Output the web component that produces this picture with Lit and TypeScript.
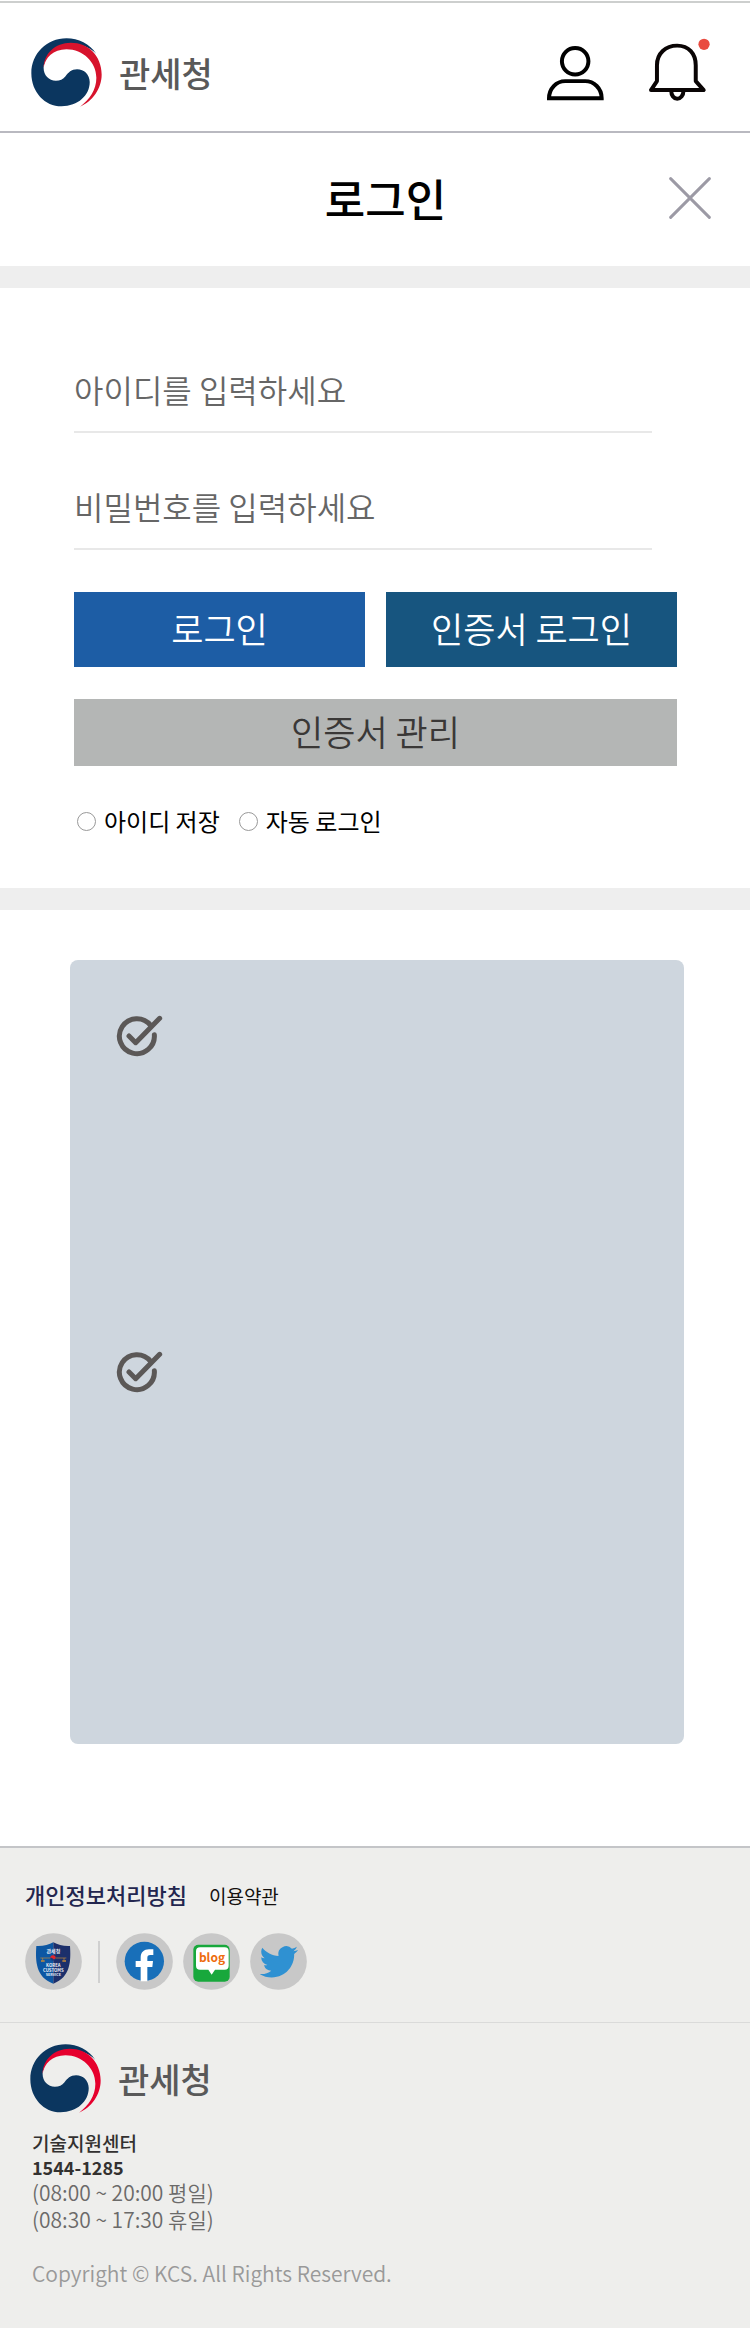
import { LitElement, html, css } from "lit";
import { customElement, property } from "lit/decorators.js";

@customElement("kcs-brand")
class KcsBrand extends LitElement {
  @property() tone = "#d7132d";

  static styles = css`
    :host { display: block; }
    .brand { display: flex; align-items: center; gap: 17px; color: #595959; text-decoration: none; font-size: 34px; line-height: 44px; font-weight: 500; }
    .emblem { display: block; width: 71px; height: 69px; flex: none; }
  `;

  render() {
    return html`
      <a class="brand" href="#">
        <svg class="emblem" viewBox="94 112 212 208" aria-hidden="true">
          <path fill="#0b365f" d="M200 113C140 113 94 160 94 218C94 275 135 318 185 318C235 318 270 285 270 245C270 222 253 206 232 206C214 206 206 216 197 227C190 236 180 241 168 241C147 241 131 225 131 202C134 165 170 130 213 130C245 130 275 142 290 160C270 130 236 113 200 113Z" />
          <path fill=${this.tone} d="M131 202C131 160 165 126 213 126C265 126 306 165 306 222C306 265 278 303 241 319C270 298 290 268 290 232C290 185 250 146 200 146C160 146 135 172 131 202Z" />
        </svg>
        <span>관세청</span>
      </a>
    `;
  }
}

@customElement("app-root")
class AppRoot extends LitElement {
  static styles = css`
    :host {
      display: flex;
      flex-direction: column;
      min-height: 100vh;
      background: #fff;
      color: #000;
      font-family: "Noto Sans CJK KR", "Noto Sans", sans-serif;
    }
    * { box-sizing: border-box; }
    button { font: inherit; border: 0; padding: 0; background: none; cursor: pointer; }
    svg { display: block; }

    .topbar { display: flex; justify-content: space-between; align-items: flex-start; margin-top: 1px; padding: 35px 40px 24px 31px; border-top: 2px solid #cdcfce; border-bottom: 2px solid #b9b9c0; }
    .tools { display: flex; align-items: flex-end; gap: 45px; }
    .person { width: 57px; height: 56px; }
    .bell { width: 61px; height: 63px; }

    .titlebar { display: grid; grid-template-columns: 1fr auto 1fr; align-items: center; padding: 44px 39px 47px 60px; }
    .title { grid-column: 2; margin: 0; font-size: 44px; line-height: 42px; font-weight: 500; }
    .close { justify-self: end; }
    .close svg { width: 42px; height: 42px; }

    .login { border-top: 22px solid #eee; border-bottom: 22px solid #eee; padding: 78px 73px 49px 74px; }
    .fields { display: grid; gap: 50px; margin-right: 25px; }
    .field { display: block; width: 100%; height: 67px; padding: 0 0 19px; border: 0; border-bottom: 2px solid #e8e8e8; border-radius: 0; outline: 0; background: none; color: #333; font: 350 32px/46px "Noto Sans CJK KR", sans-serif; }
    .field::placeholder { color: #666; opacity: 1; }
    .actions { display: grid; grid-template-columns: 1fr 1fr; gap: 32px 21px; margin-top: 42px; }
    .action { height: 75px; padding-bottom: 3px; color: #fff; font-size: 35px; line-height: 48px; font-weight: 350; }
    .enter { background: #1d5da5; }
    .cert { background: #17557f; }
    .manage { grid-column: 1 / -1; height: 67px; background: #b4b6b5; color: #3a3837; }
    .options { display: flex; gap: 19px; margin-top: 37px; padding-left: 3px; }
    .option { display: flex; align-items: center; gap: 8px; font-size: 24px; line-height: 36px; }
    .radio { appearance: none; width: 19px; height: 19px; margin: 0; border: 1px solid #999; border-radius: 50%; background: #fff; }
    .radio:checked { background: #1d5da5; box-shadow: inset 0 0 0 4px #fff; }

    .notices { margin: 50px 66px 102px 70px; padding: 55px 46px 0; border-radius: 8px; background: #ced6de; list-style: none; }
    .notice { padding-bottom: 294px; }
    .notice + .notice { padding-bottom: 351px; }
    .check { width: 48px; height: 42px; }

    .footer { flex: 1; background: #eeeeec; border-top: 2px solid #c4c5c8; }
    .policies { display: flex; align-items: baseline; gap: 22px; padding: 29px 25px 0; line-height: 34px; font-size: 19px; }
    .policies a { color: #14110f; text-decoration: none; }
    .policies .privacy { color: #23264f; font-size: 22px; font-weight: 500; }
    .social { display: flex; align-items: center; gap: 10px; padding: 20px 25px 32px; border-bottom: 1px solid #dadad9; }
    .social svg { width: 57px; height: 57px; }
    .rule { width: 2px; height: 42px; margin: 0 6px; background: #d0d0d0; }
    .org { padding: 21px 30px 36px; }
    .contact { margin: 18px 0 0 2px; font-style: normal; font-size: 21px; line-height: 27px; color: #6b6a69; font-weight: 350; }
    .contact p { margin: 0; }
    .contact .center { font-size: 19px; line-height: 24px; font-weight: 500; color: #333130; }
    .contact .phone { display: block; font-size: 18px; line-height: 24px; font-weight: 700; color: #333130; text-decoration: none; }
    .copyright { margin: 26px 0 0 2px; font-size: 21px; line-height: 28px; font-weight: 350; color: #999; }
    .tiny { font-weight: 700; text-anchor: middle; }
  `;

  private check() {
    return html`
      <svg class="check" viewBox="198 225 144 126" fill="none" stroke="#5b5857" stroke-width="15" stroke-linecap="round" stroke-linejoin="round" aria-hidden="true">
        <path d="M302 256A52.500 52.500 0 1 0 313 284" />
        <path d="M237 288L257 308L329 235" />
      </svg>
    `;
  }

  render() {
    return html`
      <header class="topbar">
        <kcs-brand></kcs-brand>
        <div class="tools">
          <button type="button" aria-label="내 정보">
            <svg class="person" viewBox="515 132 172 167" fill="none" stroke="#000" stroke-width="12">
              <circle cx="600" cy="180" r="40" />
              <path d="M521 292C521 262 543 240 570 240H630C657 240 680 262 680 292Z" />
            </svg>
          </button>
          <button type="button" aria-label="알림">
            <svg class="bell" viewBox="822 112 184 188" fill="none" stroke="#0a0505" stroke-width="12" stroke-linejoin="round">
              <path d="M846 241V193C846 158 872 134 907 134C942 134 963 158 963 193V241L987 268H828Z" />
              <path d="M889 270C889 284 897 294 907 294C917 294 926 284 926 270" />
              <circle cx="988" cy="130" r="17" fill="#e94b40" stroke="none" />
            </svg>
          </button>
        </div>
      </header>

      <div class="titlebar">
        <h1 class="title">로그인</h1>
        <button class="close" type="button" aria-label="닫기">
          <svg viewBox="882 531 127 127" stroke="#9c9aa5" stroke-width="9" stroke-linecap="round">
            <path d="M887 536L1004 653M1004 536L887 653" />
          </svg>
        </button>
      </div>

      <form class="login" @submit=${(e: Event) => e.preventDefault()}>
        <div class="fields">
          <input class="field" type="text" aria-label="아이디" placeholder="아이디를 입력하세요" />
          <input class="field" type="password" aria-label="비밀번호" placeholder="비밀번호를 입력하세요" />
        </div>
        <div class="actions">
          <button class="action enter" type="submit">로그인</button>
          <button class="action cert" type="button">인증서 로그인</button>
          <button class="action manage" type="button">인증서 관리</button>
        </div>
        <div class="options">
          <label class="option"><input class="radio" type="radio" name="keep" value="id" />아이디 저장</label>
          <label class="option"><input class="radio" type="radio" name="keep" value="auto" />자동 로그인</label>
        </div>
      </form>

      <ul class="notices">
        <li class="notice">${this.check()}</li>
        <li class="notice">${this.check()}</li>
      </ul>

      <footer class="footer">
        <nav class="policies">
          <a class="privacy" href="#">개인정보처리방침</a>
          <a href="#">이용약관</a>
        </nav>
        <div class="social">
          <a href="#" aria-label="관세청">
            <svg viewBox="74 307 171 171">
              <circle cx="159.500" cy="392.500" r="85" fill="#c8c8c8" />
              <path fill="#0d57a3" d="M108 346C128 347 145 343 159 335V459C106 440 105 390 108 346Z" />
              <path fill="#1c2f6b" d="M159 335C173 343 190 347 209 346C212 390 211 440 159 459Z" />
              <path d="M120 382H198M127 382V389M191 382V389" stroke="#c58b3a" stroke-width="2" />
              <path d="M122 389H133V393H122ZM186 389H197V393H186Z" fill="#c58b3a" />
              <circle cx="158" cy="382" r="8" fill="#1b3d7c" />
              <path d="M150 382A8 8 0 0 1 166 382Q162 388 158 384Q154 380 150 382Z" fill="#e0252c" />
              <g class="tiny" fill="#e8edf5">
                <text x="159" y="368" font-size="15">관세청</text>
                <text x="159" y="409" font-size="13">KOREA</text>
                <text x="159" y="423" font-size="13">CUSTOMS</text>
                <text x="159" y="437" font-size="11">SERVICE</text>
              </g>
            </svg>
          </a>
          <span class="rule"></span>
          <a href="#" aria-label="Facebook">
            <svg viewBox="348 307 171 171">
              <circle cx="433.500" cy="392.500" r="85" fill="#c8c8c8" />
              <circle cx="433" cy="392" r="59" fill="#186fb9" />
              <path fill="#fff" d="M422 452V409H407V391H422V381C422 365 432 356 447 356H460V373H451C444 373 442 376 442 382V391H459L457 409H442V452Z" />
            </svg>
          </a>
          <a href="#" aria-label="Blog">
            <svg viewBox="548 307 171 171">
              <circle cx="633.500" cy="392.500" r="85" fill="#c8c8c8" />
              <rect x="579" y="342" width="109" height="111" rx="15" fill="#18a83c" />
              <path fill="#fff" d="M599 350H673Q685 350 685 362V405Q685 417 673 417H644L634 432L624 417H599Q587 417 587 405V362Q587 350 599 350Z" />
              <text class="tiny" x="635" y="394" font-size="36" fill="#ee6c0e">blog</text>
            </svg>
          </a>
          <a href="#" aria-label="Twitter">
            <svg viewBox="751 307 171 171">
              <circle cx="836.500" cy="392.500" r="85" fill="#c8c8c8" />
              <path fill="#2f91d2" transform="translate(780 336) scale(4.8)" d="M23.953 4.570a10 10 0 01-2.825.775 4.958 4.958 0 002.163-2.723c-.951.555-2.005.959-3.127 1.184a4.920 4.920 0 00-8.384 4.482C7.690 8.095 4.067 6.130 1.640 3.162a4.822 4.822 0 00-.666 2.475c0 1.710.870 3.213 2.188 4.096a4.904 4.904 0 01-2.228-.616v.060a4.923 4.923 0 003.946 4.827 4.996 4.996 0 01-2.212.085 4.936 4.936 0 004.604 3.417 9.867 9.867 0 01-6.102 2.105c-.390 0-.779-.023-1.170-.067a13.995 13.995 0 007.557 2.209c9.053 0 13.998-7.496 13.998-13.985 0-.210 0-.420-.015-.630A9.935 9.935 0 0024 4.590z" />
            </svg>
          </a>
        </div>
        <div class="org">
          <kcs-brand tone="#e6002d"></kcs-brand>
          <address class="contact">
            <p class="center">기술지원센터</p>
            <a class="phone" href="tel:1544-1285">1544-1285</a>
            <p>(08:00 ~ 20:00 평일)</p>
            <p>(08:30 ~ 17:30 휴일)</p>
          </address>
          <p class="copyright">Copyright © KCS. All Rights Reserved.</p>
        </div>
      </footer>
    `;
  }
}
